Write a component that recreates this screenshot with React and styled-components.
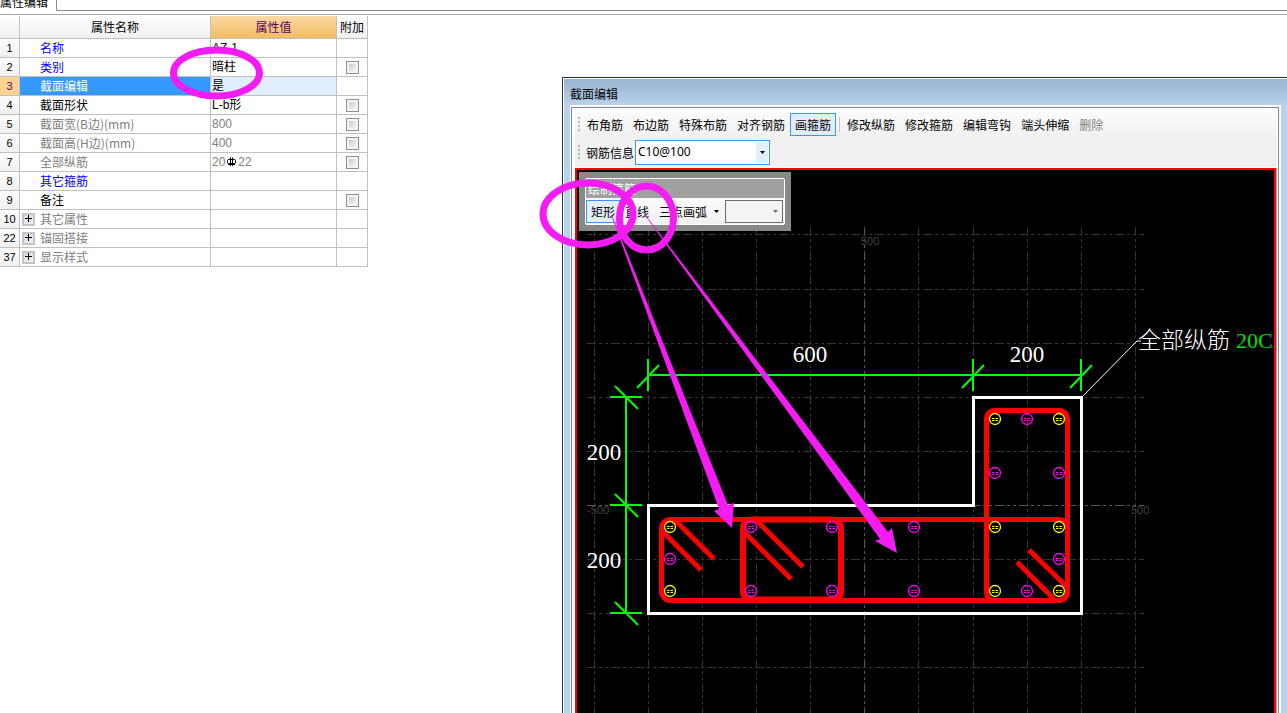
import React from "react";
import styled, { createGlobalStyle } from "styled-components";

const properties = [
  { no: 1, name: "名称", value: "AZ-1", tone: "blue" },
  { no: 2, name: "类别", value: "暗柱", tone: "blue", check: true },
  { no: 3, name: "截面编辑", value: "是", tone: "black", selected: true },
  { no: 4, name: "截面形状", value: "L-b形", tone: "black", check: true },
  { no: 5, name: "截面宽(B边)(mm)", value: "800", tone: "gray", check: true },
  { no: 6, name: "截面高(H边)(mm)", value: "400", tone: "gray", check: true },
  { no: 7, name: "全部纵筋", value: "rebar", tone: "gray", check: true },
  { no: 8, name: "其它箍筋", value: "", tone: "blue" },
  { no: 9, name: "备注", value: "", tone: "black", check: true },
  { no: 10, name: "其它属性", value: "", tone: "gray", group: true },
  { no: 22, name: "锚固搭接", value: "", tone: "gray", group: true },
  { no: 37, name: "显示样式", value: "", tone: "gray", group: true },
];

const gridX = [594, 648, 702, 756, 810, 864, 918, 973, 1027, 1081, 1135];
const gridY = [234, 289, 343, 397, 451, 505, 559, 613, 667, 721];

const cornerBars = [
  [670, 527], [670, 591], [995, 419], [1059, 419],
  [995, 527], [1059, 527], [995, 591], [1059, 591],
];
const sideBars = [
  [670, 559], [751, 527], [832, 527], [751, 591], [832, 591], [914, 527],
  [914, 591], [1027, 419], [995, 473], [1059, 473], [1027, 591], [1059, 559],
];

function RebarGrade() {
  return (
    <svg width="9" height="10" viewBox="0 0 9 10" fill="none" stroke="#000">
      <rect x="0.5" y="2.5" width="8" height="4" rx="1" />
      <path d="M3.5 0.5V9M5.5 0.5V9M1 7.5H8" />
    </svg>
  );
}

function Arrow({ color = "#000" }) {
  return (
    <svg width="5" height="3" viewBox="0 0 5 3" fill={color}>
      <path d="M0 0H5L2.5 3Z" />
    </svg>
  );
}

function PropertyTable() {
  return (
    <Table>
      <colgroup>
        <col width="20" />
        <col width="191" />
        <col width="126" />
        <col width="31" />
      </colgroup>
      <thead>
        <tr>
          <HeadCell />
          <HeadCell>属性名称</HeadCell>
          <HeadCell $active>属性值</HeadCell>
          <HeadCell>附加</HeadCell>
        </tr>
      </thead>
      <tbody>
        {properties.map((p) => (
          <tr key={p.no}>
            <NumberCell $active={p.selected}>{p.no}</NumberCell>
            <NameCell $tone={p.tone} $selected={p.selected}>
              <div>
                {p.group ? (
                  <Expander aria-label={"展开" + p.name}>
                    <svg width="8" height="8" viewBox="0 0 8 8" stroke="#000">
                      <path d="M0 3.5H7M3.5 0V7" />
                    </svg>
                  </Expander>
                ) : null}
                <span>{p.name}</span>
              </div>
            </NameCell>
            <ValueCell $tone={p.tone} $selected={p.selected}>
              {p.value === "rebar" ? (
                <>
                  20
                  <RebarGrade />
                  22
                </>
              ) : (
                p.value
              )}
            </ValueCell>
            <CheckCell>
              {p.check ? <Check type="checkbox" aria-label={p.name + "附加"} /> : null}
            </CheckCell>
          </tr>
        ))}
      </tbody>
    </Table>
  );
}

function Bar({ x, y, color }) {
  return (
    <g transform={`translate(${x} ${y})`} stroke={color} fill="none">
      <circle r="5.5" strokeWidth="1.3" />
      <path d="M-3 -0.5H-0.5M0.5 -0.5H3M-3 1.5H-0.5M0.5 1.5H3" />
    </g>
  );
}

function SectionDrawing() {
  return (
    <Drawing>
      <g transform="translate(-577 -170)">
        <g stroke="#343434" strokeDasharray="9 3 3 3 3 3">
          {gridX.map((x) => (
            <line key={x} x1={x + 0.5} x2={x + 0.5} y1="227" y2="730" stroke={x === 864 ? "#585858" : undefined} />
          ))}
          {gridY.map((y) => (
            <line key={y} x1="587" x2="1144" y1={y + 0.5} y2={y + 0.5} stroke={y === 505 ? "#585858" : undefined} />
          ))}
        </g>
        <AxisText x="861" y="245">500</AxisText>
        <AxisText x="587" y="514">-500</AxisText>
        <AxisText x="867" y="514">0</AxisText>
        <AxisText x="1131" y="514">500</AxisText>

        <path
          d="M648.5 505.5H973.5V397.5H1081.5V613.5H648.5Z"
          fill="none" stroke="#fff" strokeWidth="3"
        />
        <path d="M1082 397L1137 341H1141" fill="none" stroke="#fff" />

        {/* dimension lines */}
        <g stroke="#0f0" strokeWidth="2">
          <path d="M648 375H1081M626 397V613" />
          {[648, 973, 1081].map((x) => (
            <path key={x} d={`M${x} 359V391M${x - 11} 388L${x + 11} 365`} />
          ))}
          {[397, 505, 613].map((y) => (
            <path key={y} d={`M610 ${y}H642M615 ${y - 11}L638 ${y + 12}`} />
          ))}
        </g>

        {/* stirrups and their hooks */}
        <g stroke="#f00" strokeWidth="5" fill="none">
          <rect x="661.5" y="519.5" width="406" height="81" rx="9" />
          <rect x="986.5" y="410.5" width="81" height="190" rx="8" />
          <rect x="743" y="519.5" width="98" height="80" rx="8" strokeWidth="6" />
          <path d="M663 532L701 570M676 521L714 559" />
          <path d="M745 533L791 579M757 521L803 567" />
          <path d="M1017 562L1054 599M1029 550L1067 587" />
        </g>

        {cornerBars.map(([x, y]) => (
          <Bar key={`${x}-${y}`} x={x} y={y} color="#ff0" />
        ))}
        {sideBars.map(([x, y]) => (
          <Bar key={`${x}-${y}`} x={x} y={y} color="#f0f" />
        ))}

        <DimText x="810" y="362" textAnchor="middle">600</DimText>
        <DimText x="1027" y="362" textAnchor="middle">200</DimText>
        <DimText x="604" y="460" textAnchor="middle">200</DimText>
        <DimText x="604" y="568" textAnchor="middle">200</DimText>
        <DimText x="1138" y="348">全部纵筋</DimText>
        <DimText x="1236" y="348" $green>20C22</DimText>
      </g>
    </Drawing>
  );
}

function StirrupPanel() {
  return (
    <FloatPanel>
      <FloatFrame>
        <FloatTitle>绘制箍筋</FloatTitle>
        <FloatTools>
          <Tool $active>矩形</Tool>
          <Tool>直线</Tool>
          <DropTool>
            三点画弧
            <Arrow />
          </DropTool>
          <Combo $width="58px" $muted>
            <select aria-label="画弧方式" disabled>
              <option></option>
            </select>
            <Arrow color="#6d6d6d" />
          </Combo>
        </FloatTools>
      </FloatFrame>
    </FloatPanel>
  );
}

function SectionEditor() {
  return (
    <Window>
      <WindowFrame>
        <WindowTitle>截面编辑</WindowTitle>
        <ClientEdge>
          <Client>
            <ToolRow>
              <Grip />
              <Tool>布角筋</Tool>
              <Tool>布边筋</Tool>
              <Tool>特殊布筋</Tool>
              <Tool>对齐钢筋</Tool>
              <Tool $active>画箍筋</Tool>
              <Separator />
              <Tool>修改纵筋</Tool>
              <Tool>修改箍筋</Tool>
              <Tool>编辑弯钩</Tool>
              <Tool>端头伸缩</Tool>
              <Tool disabled>删除</Tool>
            </ToolRow>
            <InfoRow>
              <Grip />
              <label htmlFor="rebar-info">钢筋信息</label>
              <Combo $width="135px">
                <select id="rebar-info" defaultValue="C10@100">
                  <option>C10@100</option>
                </select>
                <Arrow />
              </Combo>
            </InfoRow>
            <Canvas>
              <SectionDrawing />
              <StirrupPanel />
            </Canvas>
          </Client>
        </ClientEdge>
      </WindowFrame>
    </Window>
  );
}

function Annotations() {
  return (
    <Overlay>
      <g fill="none" stroke="#f31cf3" strokeWidth="7">
        <ellipse cx="216.5" cy="73" rx="43" ry="23" />
        <ellipse cx="588" cy="214" rx="45" ry="31" />
        <ellipse cx="646.5" cy="218" rx="27" ry="32" />
      </g>
      <g fill="#f31cf3">
        <path d="M611 215L612 215L728 505L734 503L732 528L714 511L719 509Z" />
        <path d="M644 214L644 213L888 532L892 528L897 553L875 541L880 539Z" />
      </g>
    </Overlay>
  );
}

export default function App() {
  return (
    <>
      <GlobalStyle />
      <Page>
        <TabStrip>
          <TabRow>
            <Tab>属性编辑</Tab>
            <TabFill />
          </TabRow>
        </TabStrip>
        <Workspace>
          <PropertyTable />
          <SectionEditor />
        </Workspace>
        <Annotations />
      </Page>
    </>
  );
}

const GlobalStyle = createGlobalStyle`
  * {
    box-sizing: border-box;
  }
  body {
    margin: 0;
    background: #fff;
    color: #000;
    font-family: "Noto Sans CJK SC", sans-serif;
    font-size: 12px;
  }
  button, select, input {
    font: inherit;
    color: inherit;
    margin: 0;
    padding: 0;
  }
`;

const tones = { blue: "#0000f0", black: "#000", gray: "#808080" };

const Page = styled.main`
  position: relative;
  display: flex;
  flex-direction: column;
  height: 100vh;
  overflow: hidden;
`;
const TabStrip = styled.nav`
  padding-bottom: 3px;
  border-bottom: 1px solid #a6a6ae;
`;
const TabRow = styled.div`
  display: flex;
  align-items: flex-end;
  height: 11px;
  overflow: hidden;
`;
const Tab = styled.button`
  flex: none;
  height: 19px;
  padding-right: 8px;
  border: none;
  border-right: 1px solid #8c8c98;
  background: #fff;
  line-height: 19px;
`;
const TabFill = styled.div`
  flex: 1;
  height: 11px;
  border-bottom: 1px solid #8c8c98;
`;
const Workspace = styled.div`
  flex: 1;
  display: flex;
  align-items: flex-start;
  min-height: 0;
`;

const Table = styled.table`
  flex: none;
  width: 368px;
  margin-top: 1px;
  table-layout: fixed;
  border-collapse: separate;
  border-spacing: 0;
  th, td {
    height: 19px;
    padding: 0;
    border-right: 1px solid #c0c0c0;
    border-bottom: 1px solid #c0c0c0;
    font-weight: 400;
    line-height: 18px;
    white-space: nowrap;
  }
`;
const HeadCell = styled.th`
  && {
    height: 23px;
    line-height: 22px;
  }
  text-align: center;
  color: ${(p) => (p.$active ? "#5c005c" : "#000")};
  background: ${(p) =>
    p.$active
      ? "linear-gradient(#fad9a2, #f0bd63)"
      : "linear-gradient(#fff, #f0f0f0)"};
`;
const NumberCell = styled.td`
  text-align: center;
  font-family: "Liberation Sans", sans-serif;
  font-size: 11px;
  color: ${(p) => (p.$active ? "#5c005c" : "#000")};
  background: ${(p) => (p.$active ? "#ffd38f" : "linear-gradient(#fdfdfd, #f0f0f0)")};
`;
const NameCell = styled.td`
  color: ${(p) => (p.$selected ? "#fff" : tones[p.$tone])};
  background: ${(p) => (p.$selected ? "#3399ff" : "#fff")};
  div {
    display: grid;
    grid-template-columns: 18px 1fr;
    align-items: center;
    height: 18px;
    padding-left: 2px;
  }
  span {
    grid-column: 2;
  }
`;
const ValueCell = styled.td`
  && {
    padding-left: 1px;
  }
  font-family: "Liberation Sans", "Noto Sans CJK SC", sans-serif;
  color: ${(p) => (p.$tone === "gray" ? "#808080" : "#000")};
  background: ${(p) => (p.$selected ? "#e0eefd" : "#fff")};
  svg {
    margin: 0 2px;
    vertical-align: -1px;
  }
`;
const CheckCell = styled.td`
  text-align: center;
`;
const Check = styled.input`
  appearance: none;
  display: block;
  width: 13px;
  height: 13px;
  && {
    margin: 0 auto;
  }
  border: 1px solid #8e8f8f;
  background: linear-gradient(135deg, #c8ccd2, #f4f4f4) content-box, #f4f4f4;
  && {
    padding: 2px;
  }
`;
const Expander = styled.button`
  display: grid;
  place-items: center;
  width: 13px;
  height: 13px;
  border: 2px solid #c4c4c4;
  background: linear-gradient(135deg, #d4d8e0, #f4f4f4);
`;

const Window = styled.section`
  flex: 1;
  align-self: stretch;
  display: flex;
  min-width: 0;
  margin: 62px 0 0 194px;
  padding: 1px 0 0 1px;
  border: 1px solid #303030;
  border-width: 1px 0 0 1px;
  background: #fff;
`;
const WindowFrame = styled.div`
  flex: 1;
  display: flex;
  flex-direction: column;
  min-width: 0;
  padding: 0 6px;
  background: linear-gradient(#99b4d1, #b9d1ea 26px);
`;
const WindowTitle = styled.header`
  height: 26px;
  line-height: 30px;
`;
const ClientEdge = styled.div`
  flex: 1;
  display: flex;
  min-height: 0;
  padding: 2px 2px 0 1px;
  background: #fafafa;
`;
const Client = styled.div`
  flex: 1;
  display: flex;
  flex-direction: column;
  min-width: 0;
  padding: 3px 1px 0 3px;
  border: 1px solid #868690;
  border-bottom: none;
  background: #fff;
`;
const ToolRow = styled.div`
  display: flex;
  align-items: center;
  padding: 2px 0 1px 3px;
  background: linear-gradient(#fcfcfc, #f0f0f0);
`;
const InfoRow = styled.div`
  display: flex;
  align-items: center;
  padding: 3px 0 2px 3px;
  border-bottom: 1px solid #fff;
  background: #f0f0f0;
  label {
    padding: 0 1px 0 4px;
  }
`;
const Grip = styled.span`
  width: 2px;
  height: 15px;
  margin-right: 2px;
  background: repeating-linear-gradient(#b8b8b8 0 2px, transparent 2px 4px);
`;
const Separator = styled.span`
  width: 1px;
  height: 15px;
  margin: 0 2px 0 3px;
  background: #c4c4c4;
`;
const Tool = styled.button`
  flex: none;
  height: 23px;
  && {
    padding: 0 4px;
  }
  border: 1px solid ${(p) => (p.$active ? "#3399ff" : "transparent")};
  background: ${(p) => (p.$active ? "#e3eefa" : "transparent")};
  line-height: 20px;
  white-space: nowrap;
  &:disabled {
    color: #808080;
  }
`;
const DropTool = styled(Tool)`
  display: flex;
  align-items: center;
  gap: 7px;
`;
const Combo = styled.div`
  display: grid;
  align-items: center;
  width: ${(p) => p.$width};
  height: ${(p) => (p.$muted ? "23px" : "25px")};
  border: 1px solid ${(p) => (p.$muted ? "#6d6d6d" : "#3399ff")};
  background: ${(p) =>
    p.$muted ? "#f4f4f4" : "linear-gradient(#e3eefa, #e3eefa) right 1px center / 12px 21px no-repeat #fff"};
  select, svg {
    grid-area: 1 / 1;
  }
  select {
    appearance: none;
    width: 100%;
    height: 100%;
    padding: 0 14px 2px 2px;
    border: none;
    background: transparent;
    font-family: "Noto Sans", sans-serif;
  }
  svg {
    justify-self: end;
    margin-right: 4px;
    pointer-events: none;
  }
`;
const Canvas = styled.div`
  position: relative;
  flex: 1;
  display: flex;
  min-height: 0;
  overflow: hidden;
  border: 2px solid #f00;
  border-bottom: none;
  background: #000;
  margin-right: 1px;
  box-shadow: 1px 0 0 #a0a0a0;
`;
const Drawing = styled.svg`
  flex: 1;
  min-width: 0;
  overflow: hidden;
`;
const AxisText = styled.text`
  fill: #4a4040;
  font-family: "Liberation Sans", sans-serif;
  font-size: 11px;
`;
const DimText = styled.text`
  fill: ${(p) => (p.$green ? "#00e000" : "#fff")};
  font-family: "Liberation Serif", "Noto Sans CJK SC", serif;
  font-size: ${(p) => (p.$green ? "22px" : "23px")};
  font-weight: 300;
`;

const FloatPanel = styled.div`
  position: absolute;
  top: 2px;
  left: 2px;
  padding: 6px;
  background: #898989;
`;
const FloatFrame = styled.div`
  width: 200px;
  border: 1px solid #fff;
  border-radius: 2px;
  background: #f4f4f4;
`;
const FloatTitle = styled.div`
  height: 19px;
  padding-left: 2px;
  background: #a0a0a0;
  color: #fff;
  line-height: 20px;
`;
const FloatTools = styled.div`
  display: flex;
  padding: 2px 0 1px;
  background: linear-gradient(#fcfcfc, #f0f0f0);
  ${Combo} {
    margin-left: auto;
    margin-right: 1px;
  }
`;

const Overlay = styled.svg`
  position: absolute;
  inset: 0;
  width: 100%;
  height: 100%;
  pointer-events: none;
`;
